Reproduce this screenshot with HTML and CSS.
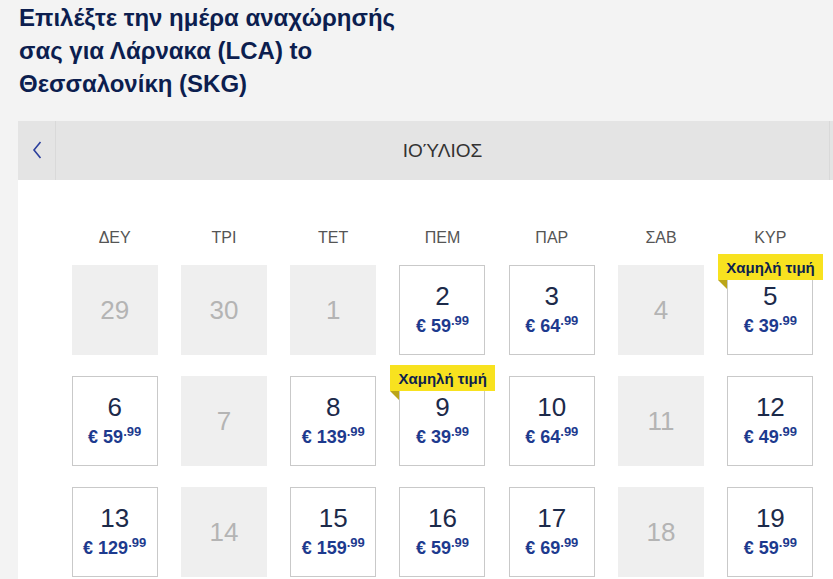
FILE: index.html
```html
<!DOCTYPE html>
<html lang="el">
<head>
    <meta charset="UTF-8">
    <meta name="viewport" content="width=device-width, initial-scale=1.0">
    <title>Επιλογή ημέρας αναχώρησης</title>
    <link rel="stylesheet" href="styles.css">
</head>
<body>
    <h1 class="title">Επιλέξτε την ημέρα αναχώρησής<br>σας για Λάρνακα (LCA) to<br>Θεσσαλονίκη (SKG)</h1>

    <div class="calendar">
        <div class="cal-head">
            <button class="nav prev" aria-label="Προηγούμενος μήνας">
                <svg width="10" height="18" viewBox="0 0 10 18"><polyline points="8.5,1 2,9 8.5,17" fill="none" stroke="#2b3f9c" stroke-width="1.6"/></svg>
            </button>
            <div class="month">ΙΟΎΛΙΟΣ</div>
            <button class="nav next" aria-label="Επόμενος μήνας"></button>
        </div>

        <div class="cal-body">
            <div class="weekdays">
                <span>ΔΕΥ</span><span>ΤΡΙ</span><span>ΤΕΤ</span><span>ΠΕΜ</span><span>ΠΑΡ</span><span>ΣΑΒ</span><span>ΚΥΡ</span>
            </div>

            <div class="days">
                <div class="day off"><span class="num">29</span></div>
                <div class="day off"><span class="num">30</span></div>
                <div class="day off"><span class="num">1</span></div>
                <div class="day"><span class="num">2</span><span class="price">€ 59<sup>.99</sup></span></div>
                <div class="day"><span class="num">3</span><span class="price">€ 64<sup>.99</sup></span></div>
                <div class="day off"><span class="num">4</span></div>
                <div class="day"><span class="badge">Χαμηλή τιμή</span><span class="num">5</span><span class="price">€ 39<sup>.99</sup></span></div>

                <div class="day"><span class="num">6</span><span class="price">€ 59<sup>.99</sup></span></div>
                <div class="day off"><span class="num">7</span></div>
                <div class="day"><span class="num">8</span><span class="price">€ 139<sup>.99</sup></span></div>
                <div class="day"><span class="badge">Χαμηλή τιμή</span><span class="num">9</span><span class="price">€ 39<sup>.99</sup></span></div>
                <div class="day"><span class="num">10</span><span class="price">€ 64<sup>.99</sup></span></div>
                <div class="day off"><span class="num">11</span></div>
                <div class="day"><span class="num">12</span><span class="price">€ 49<sup>.99</sup></span></div>

                <div class="day"><span class="num">13</span><span class="price">€ 129<sup>.99</sup></span></div>
                <div class="day off"><span class="num">14</span></div>
                <div class="day"><span class="num">15</span><span class="price">€ 159<sup>.99</sup></span></div>
                <div class="day"><span class="num">16</span><span class="price">€ 59<sup>.99</sup></span></div>
                <div class="day"><span class="num">17</span><span class="price">€ 69<sup>.99</sup></span></div>
                <div class="day off"><span class="num">18</span></div>
                <div class="day"><span class="num">19</span><span class="price">€ 59<sup>.99</sup></span></div>
            </div>
        </div>
    </div>
</body>
</html>
```

FILE: styles.css
```css
html {
    overflow: hidden;
}
body {
    margin: 0;
    background: #f3f3f3;
    font-family: "Liberation Sans", Arial, sans-serif;
}
.title {
    margin: 1px 0 0 19px;
    font-size: 24px;
    line-height: 33px;
    font-weight: bold;
    color: #0c1e4f;
}
.calendar {
    margin: 21px 0 0 18px;
    width: 849px;
    background: white;
}
.cal-head {
    display: flex;
    height: 59px;
    background: #e4e4e4;
}
.nav {
    width: 38px;
    padding: 0;
    border: none;
    background: transparent;
    display: flex;
    align-items: center;
    justify-content: center;
    cursor: pointer;
}
.prev {
    border-right: 1px solid #d9d9d9;
    padding-bottom: 2px;
}
.next {
    border-left: 1px solid #d9d9d9;
}
.month {
    flex: 1;
    text-align: center;
    line-height: 59px;
    font-size: 19px;
    color: #333;
    padding-bottom: 2px;
}
.cal-body {
    padding: 48px 42px 40px;
}
.weekdays,
.days {
    display: grid;
    grid-template-columns: repeat(7, 1fr);
    justify-items: center;
}
.weekdays span {
    font-size: 16px;
    line-height: 20px;
    color: #555;
}
.days {
    margin-top: 17px;
    row-gap: 21px;
}
.day {
    position: relative;
    box-sizing: border-box;
    width: 86px;
    height: 90px;
    padding-top: 16px;
    border: 1px solid #c9c9c9;
    background: white;
    display: flex;
    flex-direction: column;
    align-items: center;
    color: #1c2a4a;
}
.num {
    font-size: 26px;
    line-height: 29px;
}
.price {
    margin-top: 4px;
    font-size: 18px;
    line-height: 22px;
    font-weight: bold;
    color: #1d3a8e;
}
.price sup {
    font-size: 13px;
    line-height: 0;
    vertical-align: 7px;
}
.day.off {
    padding-top: 0;
    justify-content: center;
    border-color: #efefef;
    background: #efefef;
    color: #b4b4b4;
}
.badge {
    position: absolute;
    top: -12px;
    left: -10px;
    height: 26px;
    padding: 0 8px;
    background: #f8e21f;
    color: #0d1f4d;
    font-size: 15px;
    line-height: 27px;
    font-weight: bold;
    white-space: nowrap;
    z-index: 1;
}
.badge::after {
    content: "";
    position: absolute;
    left: 0;
    top: 100%;
    border-top: 9px solid #bba51a;
    border-left: 9px solid transparent;
}
```
